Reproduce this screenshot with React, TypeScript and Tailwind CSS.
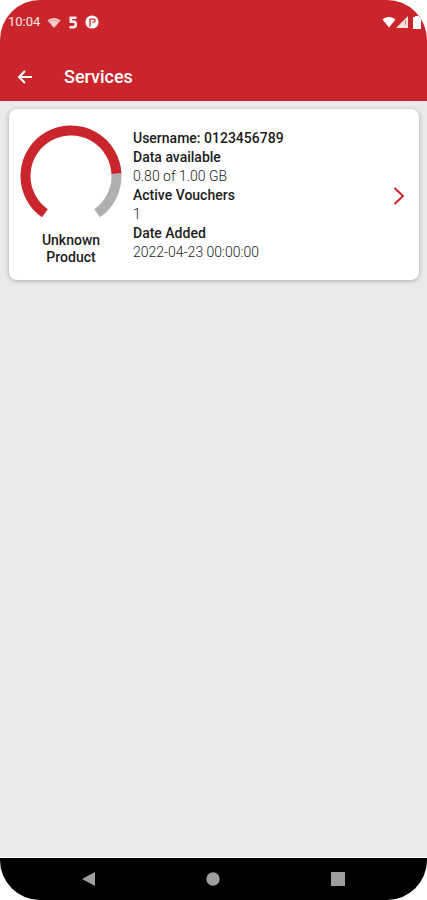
import React from 'react';

interface Service {
  id: string;
  product: string;
  username: string;
  used: number;
  total: number;
  vouchers: number;
  dateAdded: string;
}

const services: Service[] = [
  {
    id: '1',
    product: 'Unknown Product',
    username: '0123456789',
    used: 0.8,
    total: 1,
    vouchers: 1,
    dateAdded: '2022-04-23 00:00:00',
  },
];

// The gauge is open at the bottom: it starts at 125deg and sweeps 290deg clockwise
const START = 125;
const SWEEP = 290;

const arcPath = (from: number, to: number) => {
  const point = (deg: number) => {
    const rad = (deg * Math.PI) / 180;
    return `${51 + 45.5 * Math.cos(rad)} ${51 + 45.5 * Math.sin(rad)}`;
  };
  return `M${point(from)} A45.5 45.5 0 ${to - from > 180 ? 1 : 0} 1 ${point(to)}`;
};

const UsageGauge: React.FC<{ ratio: number }> = ({ ratio }) => {
  const split = START + SWEEP * ratio;
  return (
    <svg viewBox="0 0 102 94" className="w-full" fill="none" strokeWidth="10" aria-hidden="true">
      <path d={arcPath(split, START + SWEEP)} stroke="#b0b0b0" />
      <path d={arcPath(START, split)} stroke="#cb252c" />
    </svg>
  );
};

const StatusBar = () => (
  <div className="flex h-11 items-center pl-2 pr-[6px] text-white/90">
    <span className="text-[13px] leading-4">10:04</span>
    <svg width="14" height="11" viewBox="0 0 14 11" className="ml-[7px]" aria-hidden="true">
      <path d="M0.5 3.5C4 0 10 0 13.5 3.5L7 11Z" fill="currentColor" opacity="0.85" />
      <path d="M2 4.8C5 2.6 9 2.6 12 4.8" fill="none" stroke="#cb252c" strokeWidth="0.5" opacity="0.7" />
    </svg>
    <svg width="10" height="13" viewBox="0 0 10 13" className="ml-[7px]" fill="none" stroke="currentColor" strokeWidth="2.6" aria-hidden="true">
      <path d="M8.5 1.8H2.8V5.6H5.4C7.2 5.6 7.8 6.8 7.8 8.4C7.8 10.2 7 11.2 5 11.2H1.4" />
    </svg>
    <svg width="14" height="14" viewBox="0 0 14 14" className="ml-[7px]" aria-hidden="true">
      <circle cx="7" cy="7" r="6.6" fill="white" />
      <path d="M5 11.4V4.2H8.6C9.8 4.2 10.2 4.8 10.2 5.6C10.2 6.5 9.7 7.1 8.6 7.1H7.2" fill="none" stroke="#cb252c" strokeWidth="1.3" />
    </svg>
    <div className="ml-auto flex items-center text-white">
      <svg width="14" height="12" viewBox="0 0 14 12" aria-hidden="true">
        <path d="M0.5 3.5C3.5 0 10.5 0 13.5 3.5L7 11.5Z" fill="currentColor" />
      </svg>
      <svg width="12" height="12" viewBox="0 0 12 12" aria-hidden="true">
        <path d="M0 12L12 0V12Z" fill="currentColor" opacity="0.85" />
        <path d="M9.5 4V9" stroke="#cb252c" strokeWidth="1" opacity="0.5" />
      </svg>
      <svg width="8" height="13" viewBox="0 0 8 13" className="ml-[5px]" aria-hidden="true">
        <path d="M2 1V0H6V1H8V13H0V1Z" fill="currentColor" />
      </svg>
    </div>
  </div>
);

const ServiceCard: React.FC<{ service: Service }> = ({ service }) => (
  <a
    href="#service"
    className="flex items-center rounded-lg bg-white pb-[14px] pl-[11px] pr-[14px] pt-4 text-[#1c1c1c] shadow-[0_1px_5px_rgba(0,0,0,0.28)]"
  >
    <div className="w-[102px] shrink-0 text-center">
      <UsageGauge ratio={service.used / service.total} />
      <p className="mx-auto mt-[13px] w-20 text-sm leading-[17px] font-medium">{service.product}</p>
    </div>
    <dl className="ml-[11px] flex-1 text-sm leading-[19px]">
      <div className="font-medium">
        <dt className="inline">Username:</dt> <dd className="inline">{service.username}</dd>
      </div>
      <dt className="font-medium">Data available</dt>
      <dd className="font-light">
        {service.used.toFixed(2)} of {service.total.toFixed(2)} GB
      </dd>
      <dt className="font-medium">Active Vouchers</dt>
      <dd className="font-light">{service.vouchers}</dd>
      <dt className="font-medium">Date Added</dt>
      <dd className="font-light">{service.dateAdded}</dd>
    </dl>
    <svg width="12" height="18" viewBox="0 0 12 18" fill="none" stroke="#cb252c" strokeWidth="2" aria-hidden="true">
      <path d="M1.5 1L10 9L1.5 17" />
    </svg>
  </a>
);

export default function App() {
  return (
    <div className="min-h-screen bg-white font-['Roboto',sans-serif]">
      <div className="flex min-h-screen flex-col overflow-hidden rounded-[40px] bg-[#eaeaea]">
        <header className="bg-[#cb252c] text-white">
          <StatusBar />
          <div className="flex h-[57px] items-center gap-[30px] pb-1 pl-4 pt-3">
            <button type="button" aria-label="Back" className="flex h-6 w-[18px] items-center justify-center">
              <svg width="16" height="14" viewBox="0 0 16 14" fill="none" stroke="currentColor" strokeWidth="2" aria-hidden="true">
                <path d="M15 7H2M8 1L2 7L8 13" />
              </svg>
            </button>
            <h1 className="text-lg leading-6 font-medium">Services</h1>
          </div>
        </header>

        <main className="flex-1 pl-[9px] pr-2 pt-2">
          {services.map(service => (
            <ServiceCard key={service.id} service={service} />
          ))}
        </main>

        <nav className="grid h-[43px] grid-cols-3 items-center border-t border-white bg-black px-[27px] text-[#9e9e9e]">
          <button type="button" aria-label="Back" className="flex justify-center">
            <svg width="14" height="14" viewBox="0 0 14 14" fill="currentColor" aria-hidden="true">
              <path d="M13 0V14L0 7Z" />
            </svg>
          </button>
          <button type="button" aria-label="Home" className="flex justify-center">
            <svg width="14" height="14" viewBox="0 0 14 14" fill="currentColor" aria-hidden="true">
              <circle cx="7" cy="7" r="6.7" />
            </svg>
          </button>
          <button type="button" aria-label="Recent apps" className="flex justify-center">
            <svg width="14" height="14" viewBox="0 0 14 14" fill="currentColor" aria-hidden="true">
              <rect width="14" height="14" rx="0.5" />
            </svg>
          </button>
        </nav>
      </div>
    </div>
  );
}
